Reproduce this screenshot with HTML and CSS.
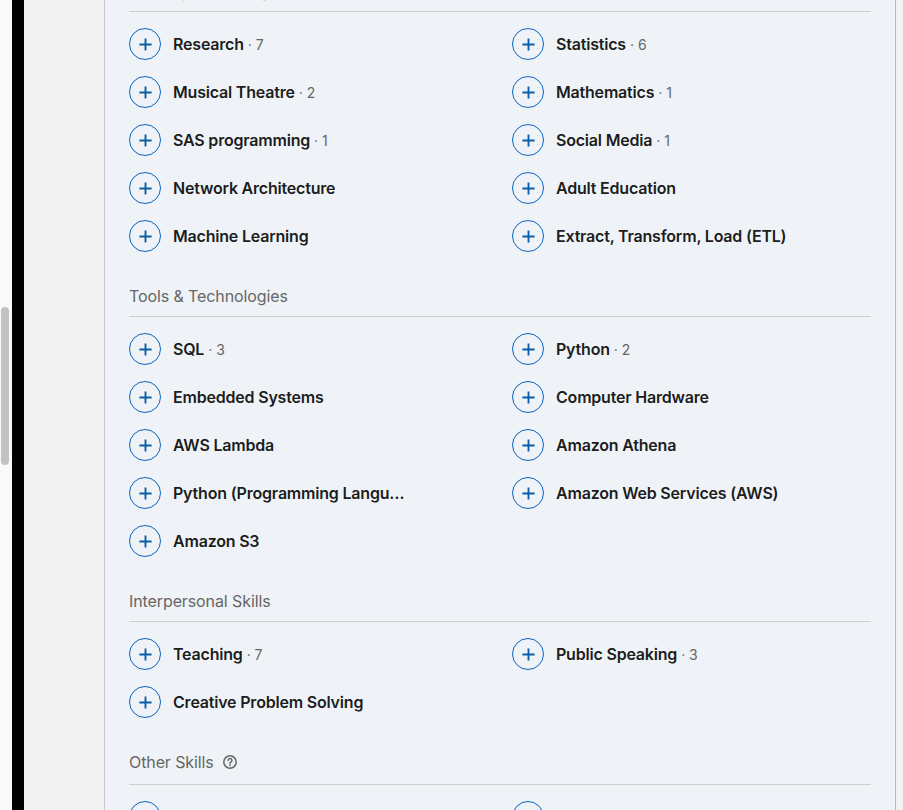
FILE: index.html
```html
<!DOCTYPE html>
<html>
<head>
<meta charset="utf-8">
<link rel="stylesheet" href="styles.css">
</head>
<body>
<div class="frame">
  <div class="track"><div class="thumb"></div></div>
  <div class="blackbar"></div>
  <div class="gutter"></div>
  <main class="panel">
    <section class="section first">
      <h3 class="sec-head">Industry Knowledge</h3>
      <div class="grid">
        <div class="skill"><span class="add"><svg viewBox="0 0 16 16"><path d="M8 1.5v13M1.5 8h13"/></svg></span><span class="name">Research</span><span class="count">· 7</span></div>
        <div class="skill"><span class="add"><svg viewBox="0 0 16 16"><path d="M8 1.5v13M1.5 8h13"/></svg></span><span class="name">Statistics</span><span class="count">· 6</span></div>
        <div class="skill"><span class="add"><svg viewBox="0 0 16 16"><path d="M8 1.5v13M1.5 8h13"/></svg></span><span class="name">Musical Theatre</span><span class="count">· 2</span></div>
        <div class="skill"><span class="add"><svg viewBox="0 0 16 16"><path d="M8 1.5v13M1.5 8h13"/></svg></span><span class="name">Mathematics</span><span class="count">· 1</span></div>
        <div class="skill"><span class="add"><svg viewBox="0 0 16 16"><path d="M8 1.5v13M1.5 8h13"/></svg></span><span class="name">SAS programming</span><span class="count">· 1</span></div>
        <div class="skill"><span class="add"><svg viewBox="0 0 16 16"><path d="M8 1.5v13M1.5 8h13"/></svg></span><span class="name">Social Media</span><span class="count">· 1</span></div>
        <div class="skill"><span class="add"><svg viewBox="0 0 16 16"><path d="M8 1.5v13M1.5 8h13"/></svg></span><span class="name">Network Architecture</span></div>
        <div class="skill"><span class="add"><svg viewBox="0 0 16 16"><path d="M8 1.5v13M1.5 8h13"/></svg></span><span class="name">Adult Education</span></div>
        <div class="skill"><span class="add"><svg viewBox="0 0 16 16"><path d="M8 1.5v13M1.5 8h13"/></svg></span><span class="name">Machine Learning</span></div>
        <div class="skill"><span class="add"><svg viewBox="0 0 16 16"><path d="M8 1.5v13M1.5 8h13"/></svg></span><span class="name">Extract, Transform, Load (ETL)</span></div>
      </div>
    </section>
    <section class="section">
      <h3 class="sec-head">Tools &amp; Technologies</h3>
      <div class="grid">
        <div class="skill"><span class="add"><svg viewBox="0 0 16 16"><path d="M8 1.5v13M1.5 8h13"/></svg></span><span class="name">SQL</span><span class="count">· 3</span></div>
        <div class="skill"><span class="add"><svg viewBox="0 0 16 16"><path d="M8 1.5v13M1.5 8h13"/></svg></span><span class="name">Python</span><span class="count">· 2</span></div>
        <div class="skill"><span class="add"><svg viewBox="0 0 16 16"><path d="M8 1.5v13M1.5 8h13"/></svg></span><span class="name">Embedded Systems</span></div>
        <div class="skill"><span class="add"><svg viewBox="0 0 16 16"><path d="M8 1.5v13M1.5 8h13"/></svg></span><span class="name">Computer Hardware</span></div>
        <div class="skill"><span class="add"><svg viewBox="0 0 16 16"><path d="M8 1.5v13M1.5 8h13"/></svg></span><span class="name">AWS Lambda</span></div>
        <div class="skill"><span class="add"><svg viewBox="0 0 16 16"><path d="M8 1.5v13M1.5 8h13"/></svg></span><span class="name">Amazon Athena</span></div>
        <div class="skill"><span class="add"><svg viewBox="0 0 16 16"><path d="M8 1.5v13M1.5 8h13"/></svg></span><span class="name">Python (Programming Language)</span></div>
        <div class="skill"><span class="add"><svg viewBox="0 0 16 16"><path d="M8 1.5v13M1.5 8h13"/></svg></span><span class="name">Amazon Web Services (AWS)</span></div>
        <div class="skill"><span class="add"><svg viewBox="0 0 16 16"><path d="M8 1.5v13M1.5 8h13"/></svg></span><span class="name">Amazon S3</span></div>
      </div>
    </section>
    <section class="section">
      <h3 class="sec-head">Interpersonal Skills</h3>
      <div class="grid">
        <div class="skill"><span class="add"><svg viewBox="0 0 16 16"><path d="M8 1.5v13M1.5 8h13"/></svg></span><span class="name">Teaching</span><span class="count">· 7</span></div>
        <div class="skill"><span class="add"><svg viewBox="0 0 16 16"><path d="M8 1.5v13M1.5 8h13"/></svg></span><span class="name">Public Speaking</span><span class="count">· 3</span></div>
        <div class="skill"><span class="add"><svg viewBox="0 0 16 16"><path d="M8 1.5v13M1.5 8h13"/></svg></span><span class="name">Creative Problem Solving</span></div>
      </div>
    </section>
    <section class="section">
      <h3 class="sec-head with-icon">Other Skills
        <svg class="help" viewBox="0 0 16 16"><circle cx="8" cy="8" r="6.2"/><path d="M6.1 6.4a1.9 1.9 0 1 1 2.6 1.8c-.5.2-.7.6-.7 1.1v.4"/><circle class="dot" cx="8" cy="11.3" r=".9"/></svg>
      </h3>
      <div class="grid">
        <div class="skill"><span class="add"><svg viewBox="0 0 16 16"><path d="M8 1.5v13M1.5 8h13"/></svg></span><span class="name">Data Analysis</span></div>
        <div class="skill"><span class="add"><svg viewBox="0 0 16 16"><path d="M8 1.5v13M1.5 8h13"/></svg></span><span class="name">Leadership</span></div>
      </div>
    </section>
  </main>
  <div class="rightgutter"></div>
</div>
</body>
</html>
```
FILE: styles.css
```css
html, body {
  margin: 0;
  padding: 0;
  height: 810px;
  overflow: hidden;
  background: #f3f3f3;
}
.frame {
  display: flex;
  height: 810px;
  font-family: Inter, "Liberation Sans", sans-serif;
}
.track {
  width: 12px;
  flex: none;
  background: #f9f9f9;
  padding-top: 307px;
  box-sizing: border-box;
}
.thumb {
  width: 8px;
  height: 158px;
  margin-left: 1px;
  border-radius: 4px;
  background: #c2c2c2;
}
.blackbar {
  width: 12px;
  flex: none;
  background: #000;
}
.gutter {
  width: 80px;
  flex: none;
  background: #f3f3f3;
  border-right: 1px solid #c9c9c9;
}
.panel {
  width: 791px;
  flex: none;
  box-sizing: border-box;
  padding: 0 24px;
  background: #eff3f7;
  border-right: 1px solid #b8b8b8;
  overflow: hidden;
}
.rightgutter {
  flex: 1;
  background: #f3f3f3;
}
.section {
  margin-top: 26px;
}
.section.first {
  margin-top: -19px;
}
.sec-head {
  margin: 0;
  padding-bottom: 10px;
  border-bottom: 1px solid #cdd0d3;
  font-size: 16px;
  line-height: 20px;
  font-weight: 400;
  color: #666666;
  display: flex;
  align-items: center;
  gap: 8px;
  letter-spacing: -0.1px;
}
.sec-head.with-icon {
  padding-bottom: 12px;
}
.help {
  width: 16px;
  height: 16px;
  fill: none;
  stroke: #666666;
  stroke-width: 1.5;
  stroke-linecap: round;
}
.help .dot {
  fill: #666666;
  stroke: none;
}
.grid {
  display: grid;
  grid-template-columns: 1fr 1fr;
  column-gap: 24px;
  padding-top: 8px;
}
.skill {
  height: 48px;
  display: flex;
  align-items: center;
  min-width: 0;
}
.add {
  width: 32px;
  height: 32px;
  box-sizing: border-box;
  border: 1px solid #0a66c2;
  border-radius: 50%;
  flex: none;
  display: flex;
  align-items: center;
  justify-content: center;
  margin-right: 12px;
}
.add svg {
  width: 15px;
  height: 15px;
  fill: none;
  stroke: #0a5ea8;
  stroke-width: 2;
}
.name {
  font-size: 16px;
  font-weight: 600;
  color: rgba(0, 0, 0, 0.9);
  white-space: nowrap;
  overflow: hidden;
  text-overflow: ellipsis;
  max-width: 236px;
  letter-spacing: -0.2px;
}
.count {
  font-size: 14px;
  color: #666666;
  margin-left: 4px;
  white-space: nowrap;
}
```
